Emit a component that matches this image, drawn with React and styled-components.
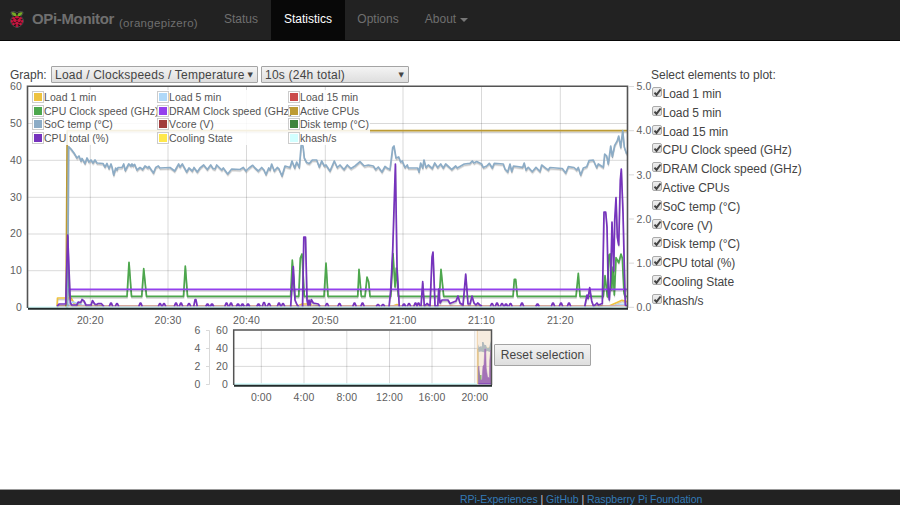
import React, { useState } from "react";
import styled, { createGlobalStyle } from "styled-components";

const SERIES = [
    { name: "Load 1 min", color: "#edc240" },
    { name: "Load 5 min", color: "#afd8f8" },
    { name: "Load 15 min", color: "#cb4b4b" },
    { name: "CPU Clock speed (GHz)", color: "#4da74d" },
    { name: "DRAM Clock speed (GHz)", color: "#9440ed" },
    { name: "Active CPUs", color: "#bd9b33" },
    { name: "SoC temp (°C)", color: "#8cacc6" },
    { name: "Vcore (V)", color: "#a23c3c" },
    { name: "Disk temp (°C)", color: "#3d853d" },
    { name: "CPU total (%)", color: "#7633bd" },
    { name: "Cooling State", color: "#ffe84c" },
    { name: "khash/s", color: "#d2ffff" },
];

// x,y pairs in chart pixels
const SOC_TEMP =
    "67.5,307 68.3,200 68.6,146.5 71,149 74,153 77,158 79,156 81,161 82,158.5 85,163.5 87,158 89,162 91,160 93,163 95,160 97,163 103,163.5 105,167 107,163.5 109,168.5 111,164 112,167 113.7,175 115.7,168 117,170 118,167.5 122,167.5 123.7,164 125.3,170.5 128.7,164 131,166 132,164 133,166 134.7,164.5 137,170 140,167.5 142.7,169.5 145,166 148,168 149,166.5 153.5,173 155.7,167.5 158.3,166 160,168 170,167.5 174.7,171 178.7,164 180,167 182.3,164 184.5,168 186.7,172 189,168 192.3,171 194,167.5 197.3,172 200,168 203.7,165 207.3,169.5 210.7,165 213,168.5 215,169 216.7,165 221.7,170 223.3,168 227.7,174 231.7,169 240,169.5 243.3,167.5 246,171 249,168 252.7,165.3 255,168 258.3,171 261.7,167.5 264,170 266,174.5 268.7,168 270,170 271.7,164 274.3,171 277.3,167.5 279,169 282,176 285,166 290,167.5 292,161 294.7,168 296.7,162 299.3,167.5 301.2,145 303,146 304.3,158 306.7,162.5 309.3,163.5 312.3,160 316.7,160 319.3,167 321.7,161 324.3,166 326,165 330,171 334.3,161 337.3,167.5 340,165 344,169.5 347.3,165 351,168.5 355,166 360,161.7 364.3,166 368.3,165 373.3,166 375.7,169.5 378.3,167 382,172 385,166.5 387,168 390,169.5 392.7,147.5 394,146 396,158 398.7,157 400.7,162 402.3,161 405,167.5 407.3,165 408.3,168 417.7,168 419,172 420.7,163 422.7,168 424,160 426,167.5 428.3,165 432.3,168.5 434.7,163 437.7,167.5 440.7,164 443.3,168 445.7,164 449,167 451.7,169.5 455.7,166 457.3,168 464.3,164 470,163.3 472.3,161 474,163 476.7,161.5 481.7,164 483.3,167.5 486.7,166 489.3,163.3 492.3,168 494.3,163.3 503.3,164 505,169 507.7,172 510,164 511.7,171.5 513.5,166 522.7,167.3 524.2,163 526,170 528.3,167.3 532.3,171.7 536,167.3 540,171.5 541.7,165 546,168.3 548.3,170 550,167.5 562.3,168.5 565.7,173 568.3,166.7 574,167.5 576.7,170 578.3,167.5 580.7,175 583.3,168 586.7,166.7 589,160.7 593.3,160 596.7,167.5 598.3,164 603.3,167.3 604.7,154 606.7,156 608.3,164 610.7,146 612.3,156.7 614.7,145.3 617.3,140.7 618.7,136 620.7,147.3 622.7,130.7 624.3,147 626.7,154";

const CPU_CLOCK =
    "66.5,307 67.5,262 69.5,296.4 127,296.4 129,262.3 131.5,296.4 141.7,296.4 143.7,268.7 146.5,296.4 183.5,296.4 185.3,266 187.5,296.4 290.6,296.4 292.3,260 294.7,296.4 298.7,296.4 300.3,258 302,254 304.3,296.4 324,296.4 326,263 328,296.4 357.7,296.4 359,269.3 361.3,296.4 365,296.4 367,277 368.7,282 370,296.4 390.7,296.4 393,253.5 395,287 396.3,268 398.3,296.4 439.3,296.4 441,269.3 443.7,296.4 513,296.4 514.3,279.3 515.7,279.3 517.3,296.4 576,296.4 578.3,273.3 580,296.4 603.3,296.4 605,275.7 607.3,296.7 609,255 610.3,254 611.7,290 613,267 614.3,295 616,257.7 618.7,262.7 621,254 622.3,258 624,293 625,296.4 627,296.4";

// busy stretches of the CPU usage line, the idle blips are in CPU_BLIPS
const CPU_TOTAL = [
    "57,306.5 59,304 65.7,304 67.7,235 70.3,303 72,305 76.7,305 78.3,302 80.7,302.5 82,299.5 84,301 86,305 91,305 92.5,300.5 94.7,304 97,304.5 98,303.5 101.5,303.7 104,306.5",
    "290.6,307 293.3,266.7 295,300 297,304.5 299,307",
    "302.5,307 303.8,237 305.5,237 307,300 308,305 309,300 310,305 311.3,299.5 313.3,303 318.3,304 320,306.5",
    "389,307 390.7,290 392.7,250 395.4,164 397,267 399.3,307",
    "421,306 422.7,281.7 424.3,306 427,303.5 430,306 432,257 433,252 435,306 437.7,306 438.7,289 440,303 442,300 448,300 450,303.5 456,301 458,296 460,303 463,305 465.7,274 468,304 470,304 472,296 474,303 476,305 477.7,303 480,305 482,306",
    "584.7,306.5 587,295 588,298.5 589.7,287.7 591.7,301 593.5,306 595,305 597,303 598.5,305 602.3,303.5 604,212 605.7,212 607,227 608.3,293 609.3,300 610.7,277 612,222 613.7,271 614.7,220 616,197.7 617.3,237 618.7,245 620.3,180 621.3,169 623,213 624.3,267 625.3,305 627,306",
];

const CPU_BLIPS = [
    [111, 303], [117, 303.5], [140.5, 303], [160, 303.5], [164, 303.5],
    [176, 303], [181, 303], [189, 303.5], [195.5, 299.5], [207.5, 304],
    [212, 304], [226.5, 303], [231, 303], [238, 304], [242.5, 304],
    [248, 304], [258.5, 304], [264, 302.5], [269, 303.5], [279, 303],
    [283, 303.5], [327, 303.5], [339.5, 303.5], [354.5, 303], [362.5, 303],
    [378, 304.5], [383, 304.5], [404, 304], [409, 303.5], [415.5, 303],
    [418.5, 303], [492, 303.5], [497, 303], [502, 303.5], [506, 304],
    [510.5, 303.5], [522, 303], [537.5, 304], [553, 303], [561, 303],
    [569, 303],
];

const TIMES = [
    [90.3, "20:20"], [168, "20:30"], [246.5, "20:40"], [325.3, "20:50"],
    [403, "21:00"], [481.5, "21:10"], [560.3, "21:20"],
];

const OVERVIEW_TIMES = [
    [261.3, "0:00"], [304, "4:00"], [346.8, "8:00"],
    [389.5, "12:00"], [432, "16:00"], [474.8, "20:00"],
];

const Line = ({ points, color, shadow = true }) => (
    <g fill="none" strokeLinejoin="round">
        {shadow && (
            <g stroke="#000">
                <polyline
                    points={points}
                    strokeWidth="1.4"
                    strokeOpacity="0.1"
                    transform="translate(0.3 2)"
                />
                <polyline
                    points={points}
                    strokeWidth="0.9"
                    strokeOpacity="0.2"
                    transform="translate(0.2 1.3)"
                />
            </g>
        )}
        <polyline points={points} stroke={color} strokeWidth="1.7" />
    </g>
);

const MainChart = () => (
    <Plot width="641" height="244" viewBox="10 84 641 244">
        <defs>
            <clipPath id="plotArea">
                <rect x="28" y="86" width="599.5" height="222.5" />
            </clipPath>
        </defs>
        {TIMES.map(([x]) => (
            <path key={x} d={`M${x} 87V307`} stroke="#000" strokeOpacity="0.15" />
        ))}
        {[123.5, 160.3, 197.3, 234, 270.7].map((y) => (
            <path key={y} d={`M28 ${y}H627`} stroke="#000" strokeOpacity="0.15" />
        ))}
        <g clipPath="url(#plotArea)">
            <Line points="57,306.5 57.5,298 71,298 74,303 80,306 298,306 302,304 309,304 313,306 393,306 397,304.5 400,306 609,306 617,302.5 622,300.3 627,301.5" color="#edc240" />
            <Line points="67,306.3 73,302 82,305 90,306.3 612,306.3 620,304.5 627,304" color="#afd8f8" shadow={false} />
            <Line points="57,306 627,306" color="#d99a96" shadow={false} />
            <Line points={CPU_CLOCK} color="#4da74d" />
            <Line points="66.8,307 67.6,289.4 627,289.4" color="#9440ed" />
            <Line points="66,307 67.2,130.7 627,130.7" color="#bd9b33" />
            <Line points={SOC_TEMP} color="#8cacc6" />
            {CPU_TOTAL.map((points) => (
                <Line key={points} points={points} color="#7633bd" />
            ))}
            {CPU_BLIPS.map(([x, y]) => (
                <Line
                    key={x}
                    points={`${x - 1.8},306.5 ${x - 0.4},${y} ${x + 0.4},${y} ${x + 1.8},306.5`}
                    color="#7633bd"
                    shadow={false}
                />
            ))}
            <path d="M28 307.1H627" stroke="#d2ffff" strokeWidth="1.4" />
        </g>
        <path d="M28 308.8H628" stroke="#222b2b" strokeWidth="2" />
        <path d="M27.5 308V86.2H627.5V308" fill="none" stroke="#545454" strokeWidth="1.6" />
        {[0, 1, 2, 3, 4, 5].map((n) => (
            <path key={n} d={`M629 ${307.3 - n * 44.15}h5`} stroke="#d9d9d9" />
        ))}
        <g textAnchor="end">
            {[0, 10, 20, 30, 40, 50, 60].map((n) => (
                <text key={n} x="22" y={311 - n * 3.68}>
                    {n}
                </text>
            ))}
        </g>
        {[0, 1, 2, 3, 4, 5].map((n) => (
            <text key={n} x="636.5" y={311 - n * 44.15}>
                {n}.0
            </text>
        ))}
        <g textAnchor="middle">
            {TIMES.map(([x, label]) => (
                <text key={x} x={x} y="324">
                    {label}
                </text>
            ))}
        </g>
    </Plot>
);

const OverviewChart = () => (
    <Plot width="308" height="78" viewBox="186 328 308 78">
        {OVERVIEW_TIMES.map(([x]) => (
            <path key={x} d={`M${x} 331V384`} stroke="#000" strokeOpacity="0.15" />
        ))}
        {[348.4, 366.4].map((y) => (
            <path key={y} d={`M234 ${y}H491`} stroke="#000" strokeOpacity="0.15" />
        ))}
        <path d="M478 384V349L491 348" fill="none" stroke="#bd9b33" />
        <path
            d="M478 344L479 347L481.500 346L482 348V342H483.500L484.500 345H486L487 348L489 348L490 344L491 341V350L490 352L487 351L485 352.500L481 351.500L478.500 352Z"
            fill="#8cacc6"
        />
        <path d="M478.300 383V366L480 375H481.500V383Z" fill="#4da74d" />
        <path
            d="M478.500 384L478.800 366L479.600 380H482L483 366L484 365L484.800 349H485.700L486.200 368L487.500 377L489.300 378L489.800 360L490.800 350L491.500 384Z"
            fill="#7633bd"
            stroke="#7633bd"
            strokeWidth="0.6"
        />
        <rect x="477" y="330" width="14" height="53.500" fill="#e8cfb0" fillOpacity="0.4" />
        <path d="M477.200 330V384" stroke="#e8b878" strokeOpacity="0.6" />
        <path d="M234 384H477" stroke="#d2ffff" strokeWidth="1.4" />
        <path d="M234 385.800H492" stroke="#222b2b" strokeWidth="2" />
        <path d="M233.700 385V329.900H491.500V385" fill="none" stroke="#545454" strokeWidth="1.500" />
        <path d="M206 330.500H209.500V384.500H206M206 348.500H209M206 366.500H209" fill="none" stroke="#d9d9d9" />
        <g textAnchor="end">
            {[0, 1, 2, 3].map((n) => (
                <text key={n} x="200.500" y={388.2 - n * 18}>
                    {n * 2}
                </text>
            ))}
            {[0, 1, 2, 3].map((n) => (
                <text key={n} x="228" y={388.2 - n * 18}>
                    {n * 20}
                </text>
            ))}
        </g>
        <g textAnchor="middle">
            {OVERVIEW_TIMES.map(([x, label]) => (
                <text key={x} x={x} y="401">
                    {label}
                </text>
            ))}
        </g>
    </Plot>
);

const Raspberry = () => (
    <svg width="14" height="17" viewBox="0 0 14 17">
        <path
            d="M1 1.200C3 .2 5.500 .4 7 2.200C8.500 .4 11 .2 13 1.200C12.800 3 12 4.500 10.800 5.400C12.600 7 13.600 8.600 13.400 10.500C13 13.500 10 15.800 7 16.600C4 15.800 1 13.500 .6 10.500C.4 8.600 1.400 7 3.200 5.400C2 4.500 1.200 3 1 1.200Z"
            fill="#111"
            stroke="#666"
            strokeWidth="0.7"
        />
        <path d="M1.500 1.500C4 .9 6.200 1.700 6.800 5C4.300 5.900 2.200 4.800 1.500 1.500ZM12.500 1.500C10 .9 7.800 1.700 7.200 5C9.700 5.900 11.800 4.800 12.500 1.500Z" fill="#75a928" />
        <g fill="#c7153f">
            <ellipse cx="7" cy="6.300" rx="2.100" ry="1.200" />
            <ellipse cx="3.600" cy="7.300" rx="1.500" ry="1.200" />
            <ellipse cx="10.400" cy="7.300" rx="1.500" ry="1.200" />
            <ellipse cx="4.900" cy="9.500" rx="1.900" ry="1.700" />
            <ellipse cx="9.100" cy="9.500" rx="1.900" ry="1.700" />
            <ellipse cx="1.900" cy="10.200" rx="1" ry="1.700" />
            <ellipse cx="12.100" cy="10.200" rx="1" ry="1.700" />
            <ellipse cx="7" cy="12.300" rx="1.900" ry="1.600" />
            <ellipse cx="3.500" cy="12.900" rx="1.400" ry="1.400" />
            <ellipse cx="10.500" cy="12.900" rx="1.400" ry="1.400" />
            <ellipse cx="7" cy="15.100" rx="1.700" ry="1" />
        </g>
    </svg>
);

const App = () => {
    const [hidden, setHidden] = useState([]);

    const toggle = (name) =>
        setHidden(
            hidden.includes(name)
                ? hidden.filter((n) => n !== name)
                : [...hidden, name]
        );

    return (
        <Page>
            <GlobalStyle />
            <Navbar>
                <Brand>
                    <Raspberry />
                    <Title>OPi-Monitor</Title>
                    <Host>(orangepizero)</Host>
                </Brand>
                <NavItem $width={60}>Status</NavItem>
                <NavItem $width={74} $active>
                    Statistics
                </NavItem>
                <NavItem $width={66}>Options</NavItem>
                <NavItem $width={71}>
                    About <Caret />
                </NavItem>
            </Navbar>
            <Content>
                <Graphs>
                    <Toolbar>
                        <GraphLabel>Graph:</GraphLabel>
                        <Picker $width={207}>
                            <PickerText>Load / Clockspeeds / Temperature</PickerText>
                            <Arrow>▼</Arrow>
                        </Picker>
                        <Picker $width={148}>
                            <PickerText>10s (24h total)</PickerText>
                            <Arrow>▼</Arrow>
                        </Picker>
                    </Toolbar>
                    <ChartBox>
                        <MainChart />
                        <Legend>
                            {SERIES.map((s) => (
                                <LegendItem key={s.name}>
                                    <Swatch $color={s.color} />
                                    {s.name}
                                </LegendItem>
                            ))}
                        </Legend>
                    </ChartBox>
                    <OverviewRow>
                        <OverviewChart />
                        <Button>Reset selection</Button>
                    </OverviewRow>
                </Graphs>
                <Elements>
                    <ElementsTitle>Select elements to plot:</ElementsTitle>
                    {SERIES.map((s) => (
                        <Element key={s.name} onClick={() => toggle(s.name)}>
                            <Check>
                                {!hidden.includes(s.name) && (
                                    <svg width="9" height="9" viewBox="0 0 9 9">
                                        <path
                                            d="M1.500 4.700L3.500 6.900L7.600 1.500"
                                            fill="none"
                                            stroke="#444"
                                            strokeWidth="2"
                                        />
                                    </svg>
                                )}
                            </Check>
                            {s.name}
                        </Element>
                    ))}
                </Elements>
            </Content>
            <Footer>
                <FooterLink>RPi-Experiences</FooterLink> |{" "}
                <FooterLink>GitHub</FooterLink> |{" "}
                <FooterLink>Raspberry Pi Foundation</FooterLink>
            </Footer>
        </Page>
    );
};

export default App;

const GlobalStyle = createGlobalStyle`
    * {
        box-sizing: border-box;
    }
    body {
        margin: 0;
        background: #fff;
        color: #444;
        font: 12px "Liberation Sans", Arial, sans-serif;
    }
`;

const Page = styled.div`
    display: flex;
    flex-direction: column;
    width: 900px;
    height: 505px;
    overflow: hidden;
    white-space: nowrap;
`;

const Navbar = styled.nav`
    display: flex;
    height: 41px;
    background: #222;
    border-bottom: 1px solid #080808;
    color: #6f6f6f;
`;

const Brand = styled.div`
    display: flex;
    width: 211px;
    padding: 11px 0 0 10px;
`;

const Title = styled.span`
    margin-left: 8px;
    font-size: 15px;
    line-height: 16px;
    font-weight: bold;
    letter-spacing: -0.35px;
`;

const Host = styled.span`
    margin: 4px 0 0 5px;
    font-size: 11.5px;
    line-height: 16px;
    letter-spacing: 0.3px;
`;

const NavItem = styled.div`
    display: flex;
    align-items: center;
    justify-content: center;
    width: ${(props) => props.$width}px;
    height: 40px;
    padding-bottom: 2px;
    background: ${(props) => (props.$active ? "#080808" : "transparent")};
    color: ${(props) => (props.$active ? "#fff" : "#6f6f6f")};
`;

const Caret = styled.span`
    margin: 2px 0 0 4px;
    border: 4px solid transparent;
    border-top-color: #777;
    border-bottom: 0;
`;

const Content = styled.main`
    display: flex;
    flex: 1;
    padding: 25px 0 0 10px;
`;

const Graphs = styled.section`
    width: 641px;
`;

const Toolbar = styled.div`
    display: flex;
    height: 18px;
`;

const GraphLabel = styled.span`
    width: 41px;
    line-height: 18px;
`;

const Picker = styled.div`
    display: flex;
    align-items: center;
    justify-content: space-between;
    width: ${(props) => props.$width}px;
    height: 17px;
    margin-right: 3px;
    padding: 0 4px 0 3px;
    border: 1px solid #a4a4a4;
    border-radius: 1px;
    background: linear-gradient(#f4f4f4, #dedede);
`;

const PickerText = styled.span`
    letter-spacing: 0.22px;
`;

const Arrow = styled.span`
    font: 7px "DejaVu Sans", sans-serif;
`;

const ChartBox = styled.div`
    position: relative;
    height: 244px;
`;

const Plot = styled.svg`
    display: block;
    overflow: visible;

    text {
        fill: #606060;
        font-size: 10.5px;
        letter-spacing: 0.1px;
    }
`;

const Legend = styled.div`
    position: absolute;
    top: 6px;
    left: 22px;
    display: grid;
    grid-template-columns: 125px 131px 82px;
    grid-auto-rows: 13.8px;
    background: rgba(255, 255, 255, 0.85);
    color: #545454;
    font-size: 10.5px;
    letter-spacing: 0.04px;
`;

const LegendItem = styled.div`
    display: flex;
    align-items: center;
`;

const Swatch = styled.span`
    flex: none;
    width: 12px;
    height: 12px;
    border: 1px solid #ccc;
    padding: 1px;
    background: ${(props) => props.$color} content-box;
`;

const OverviewRow = styled.div`
    display: flex;
    padding-left: 176px;
`;

const Button = styled.button`
    width: 97px;
    height: 22px;
    margin-top: 16px;
    padding: 0;
    border: 1px solid #a4a4a4;
    border-radius: 1px;
    background: linear-gradient(#f4f4f4, #dedede);
    color: #444;
    font: inherit;
    letter-spacing: 0.1px;
`;

const Elements = styled.aside`
    position: relative;
`;

const ElementsTitle = styled.div`
    height: 18px;
    line-height: 18px;
`;

const Element = styled.label`
    display: flex;
    height: 18.8px;
    line-height: 20px;
    letter-spacing: -0.04px;
`;

const Check = styled.span`
    display: flex;
    width: 10px;
    height: 10px;
    margin: 3px 1px 0 0.5px;
    border: 1px solid #aaa;
    border-radius: 2px;
    background: linear-gradient(#eee, #dcdcdc);

    svg {
        flex: none;
    }
`;

const Footer = styled.footer`
    height: 16px;
    padding-left: 460px;
    border-top: 1px solid #999;
    background: #222;
    color: #ccc;
    font-size: 10.5px;
    line-height: 18px;
    letter-spacing: -0.04px;
`;

const FooterLink = styled.a`
    color: #337ab7;
`;
